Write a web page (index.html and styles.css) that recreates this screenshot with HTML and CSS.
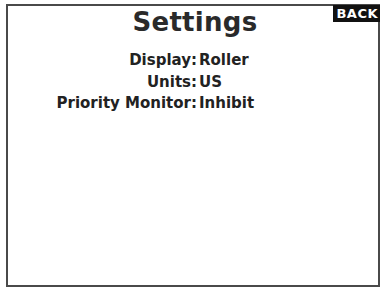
FILE: index.html
```html
<!DOCTYPE html>
<html>
<head>
<meta charset="utf-8">
<link rel="stylesheet" href="styles.css">
</head>
<body>
<div class="screen">
  <div class="back">BACK</div>
  <h1 class="title">Settings</h1>
  <div class="list">
    <span class="label">Display:</span><span class="value">Roller</span>
    <span class="label">Units:</span><span class="value">US</span>
    <span class="label">Priority Monitor:</span><span class="value">Inhibit</span>
  </div>
</div>
</body>
</html>
```
FILE: styles.css
```css
html, body {
  margin: 0;
  padding: 0;
  background: #fff;
}
body {
  width: 385px;
  height: 290px;
  overflow: hidden;
  font-family: "DejaVu Sans", sans-serif;
  color: #1e1e1e;
}
.screen {
  position: relative;
  box-sizing: border-box;
  margin: 4px 0 0 6px;
  width: 374px;
  height: 283px;
  border: 2px solid #4a4a4a;
}
.back {
  position: absolute;
  top: -1px;
  right: -2px;
  background: #111;
  color: #fff;
  font-family: "DejaVu Sans", sans-serif;
  font-weight: bold;
  font-size: 13px;
  line-height: 17px;
  padding: 0 2px 0 3px;
  letter-spacing: 0.5px;
}
.title {
  margin: 0;
  padding-left: 4px;
  text-align: center;
  font-weight: bold;
  font-size: 26px;
  line-height: 32px;
  letter-spacing: 0.3px;
  color: #2a2a2a;
}
.list {
  display: grid;
  grid-template-columns: 189px auto;
  column-gap: 2px;
  row-gap: 4px;
  margin-top: 14px;
  font-family: "DejaVu Sans", sans-serif;
  font-weight: bold;
  font-size: 15px;
  line-height: 17.5px;
  color: #222;
}
.label {
  text-align: right;
}
.value {
  text-align: left;
}
```
